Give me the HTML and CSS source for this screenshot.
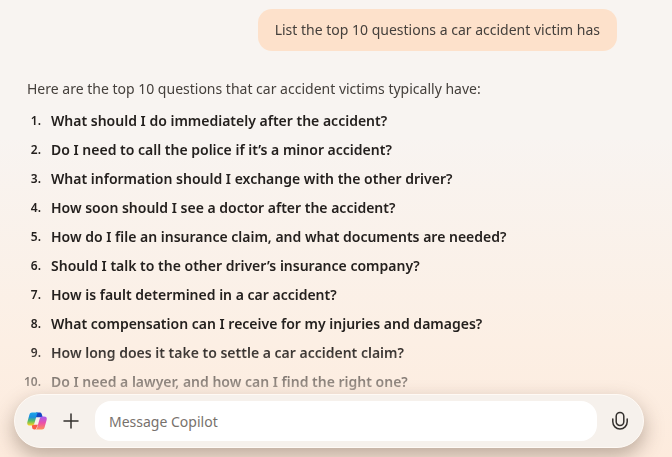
FILE: index.html
```html
<!DOCTYPE html>
<html lang="en">
<head>
  <meta charset="UTF-8">
  <meta name="viewport" content="width=device-width, initial-scale=1.0">
  <title>Copilot</title>
  <link rel="stylesheet" href="styles.css">
</head>
<body>
  <main class="chat">
    <p class="user-message">List the top 10 questions a car accident victim has</p>
    <div class="answer">
      <p class="intro">Here are the top 10 questions that car accident victims typically have:</p>
      <ol class="questions">
        <li>What should I do immediately after the accident?</li>
        <li>Do I need to call the police if it’s a minor accident?</li>
        <li>What information should I exchange with the other driver?</li>
        <li>How soon should I see a doctor after the accident?</li>
        <li>How do I file an insurance claim, and what documents are needed?</li>
        <li>Should I talk to the other driver’s insurance company?</li>
        <li>How is fault determined in a car accident?</li>
        <li>What compensation can I receive for my injuries and damages?</li>
        <li>How long does it take to settle a car accident claim?</li>
        <li>Do I need a lawyer, and how can I find the right one?</li>
      </ol>
    </div>
  </main>

  <form class="composer">
    <button class="icon-btn" type="button" aria-label="Copilot home">
      <svg width="20" height="20" viewBox="0 0 20 20">
        <defs>
          <linearGradient id="cool" x1="0" y1="0" x2="0" y2="1">
            <stop offset="0" stop-color="#1ba6ea"/>
            <stop offset=".35" stop-color="#1a8fe0"/>
            <stop offset=".65" stop-color="#5cbf62"/>
            <stop offset="1" stop-color="#ffd21c"/>
          </linearGradient>
          <linearGradient id="warm" x1="0" y1="0" x2="0" y2="1">
            <stop offset="0" stop-color="#a35cf0"/>
            <stop offset=".5" stop-color="#ec4fa8"/>
            <stop offset="1" stop-color="#ff8f58"/>
          </linearGradient>
        </defs>
        <path fill="#1747c4" d="M9 1.500h3.600c1.200 0 1.900.6 2.200 1.700l.9 3H9z"/>
        <path fill="#fa5c48" d="M4.800 13.800H11L9.400 17c-.4 1-1 1.500-2 1.500-1.300 0-2-.6-2.200-1.700z"/>
        <path fill="url(#cool)" d="M5 1.500h6.500c-.9.300-1.300 1-1.600 2L7.500 12c-.5 1.700-1.300 2.500-2.800 2.500H3c-2.300 0-3.200-1.400-2.600-3.500L2.300 4C2.900 2.200 3.600 1.500 5 1.500z"/>
        <path fill="url(#warm)" d="M15 18.500H8.500c1-.3 1.400-1 1.700-2L12.600 8c.5-1.700 1.300-2.500 2.700-2.500H17c2.300 0 3.200 1.400 2.600 3.500L17.700 16c-.5 1.800-1.300 2.500-2.700 2.500z"/>
      </svg>
    </button>
    <button class="icon-btn" type="button" aria-label="Add attachment">
      <svg width="16" height="16" viewBox="0 0 16 16" fill="none" stroke="#33302d" stroke-width="1.500" stroke-linecap="round">
        <path d="M8 1v14M1 8h14"/>
      </svg>
    </button>
    <input class="message" type="text" placeholder="Message Copilot" aria-label="Message Copilot">
    <button class="icon-btn" type="button" aria-label="Talk to Copilot">
      <svg width="18" height="20" viewBox="0 0 18 20" fill="none" stroke="#33302d" stroke-width="1.500" stroke-linecap="round">
        <rect x="5.200" y="1.500" width="7.600" height="13" rx="3.800"/>
        <path d="M1.800 8v2.800a7.200 7.200 0 0 0 14.400 0V8"/>
      </svg>
    </button>
  </form>
</body>
</html>
```

FILE: styles.css
```css
* {
  box-sizing: border-box;
}

body {
  display: flex;
  flex-direction: column;
  height: 100vh;
  margin: 0;
  padding-bottom: 9px;
  overflow: hidden;
  font-family: "Noto Sans", sans-serif;
  font-size: 14px;
  line-height: 20px;
  color: #45403c;
  background: linear-gradient(#f8f4f1 30%, #fcefe4 75%, #fdebdd);
}

p,
ol {
  margin: 0;
  padding: 0;
}

/* conversation, fades out just above the composer */
.chat {
  display: flex;
  flex: 1;
  flex-direction: column;
  min-height: 0;
  padding: 9px 55px 0 27px;
  -webkit-mask-image: linear-gradient(to top, rgba(0, 0, 0, .35), #000 50px);
  mask-image: linear-gradient(to top, rgba(0, 0, 0, .35), #000 50px);
}

.user-message {
  align-self: flex-end;
  padding: 11px 17px;
  border-radius: 14px;
  background: #fde1cb;
}

.answer {
  margin-top: 28px;
}

.questions {
  margin-top: 7px;
  list-style: none;
  counter-reset: question;
  font-weight: 600;
  line-height: 29px;
  color: #24201e;
}

.questions li {
  display: flex;
  gap: 10px;
  counter-increment: question;
}

.questions li::before {
  content: counter(question) ".";
  flex: none;
  width: 18px;
  margin-left: -4px;
  font-size: 12px;
  text-align: right;
}

.composer {
  display: flex;
  align-items: center;
  margin: 0 28px 0 14px;
  padding: 6px 6px 6px 5px;
  border: 1px solid #fffaf5;
  border-radius: 27px;
  background: #f6f1ec;
  box-shadow: 0 8px 20px rgba(90, 70, 55, .4);
}

.icon-btn {
  display: flex;
  flex: none;
  align-items: center;
  justify-content: center;
  width: 34px;
  height: 34px;
  padding: 0;
  border: 0;
  background: none;
}

.message {
  flex: 1;
  min-width: 0;
  height: 40px;
  margin: 0 6px 0 7px;
  padding: 0 14px;
  border: 0;
  border-radius: 16px;
  font: inherit;
  color: #45403c;
  background: #fff;
}

.message::placeholder {
  color: #77716c;
  opacity: 1;
}
```
